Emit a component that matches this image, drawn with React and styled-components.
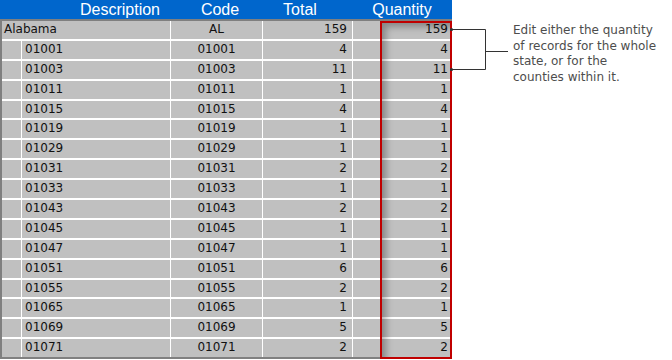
import styled, { createGlobalStyle } from "styled-components";

const counties = [
  ["01001", 4],
  ["01003", 11],
  ["01011", 1],
  ["01015", 4],
  ["01019", 1],
  ["01029", 1],
  ["01031", 2],
  ["01033", 1],
  ["01043", 2],
  ["01045", 1],
  ["01047", 1],
  ["01051", 6],
  ["01055", 2],
  ["01065", 1],
  ["01069", 5],
  ["01071", 2],
];

const App = () => {
  return (
    <>
      <GlobalStyle />
      <Page>
        <TableWrap>
          <Header>
            <HeadCell>Description</HeadCell>
            <HeadCell>Code</HeadCell>
            <HeadCell>Total</HeadCell>
            <HeadCell $pad={22}>Quantity</HeadCell>
          </Header>
          <Body>
            <Row>
              <Desc $state>Alabama</Desc>
              <Code>AL</Code>
              <Num>159</Num>
              <Qty>159</Qty>
            </Row>
            {counties.map(([code, total]) => (
              <Row key={code}>
                <Indent />
                <Desc>{code}</Desc>
                <Code>{code}</Code>
                <Num>{total}</Num>
                <Qty>{total}</Qty>
              </Row>
            ))}
          </Body>
          <Highlight />
        </TableWrap>
        <Note>
          <Bracket width="60" height="80" viewBox="0 0 60 80">
            <circle cx="1.5" cy="29.5" r="1.6" fill="#333" />
            <circle cx="1.5" cy="69.5" r="1.6" fill="#333" />
            <path
              d="M1.5 29.5 H35.5 V69.5 H1.5 M35.5 51.5 H58"
              fill="none"
              stroke="#333"
              strokeWidth="1"
            />
          </Bracket>
          <NoteText>
            Edit either the quantity
            <br />
            of records for the whole
            <br />
            state, or for the
            <br />
            counties within it.
          </NoteText>
        </Note>
      </Page>
    </>
  );
};

const GlobalStyle = createGlobalStyle`
  body {
    margin: 0;
    background: #ffffff;
  }
`;

const Page = styled.div`
  width: 672px;
  height: 360px;
  display: flex;
  overflow: hidden;
`;

const TableWrap = styled.div`
  position: relative;
  width: 452px;
  flex-shrink: 0;
`;

const Header = styled.div`
  height: 19px;
  background: #0066cc;
  border-bottom: 2px solid #7f7f7f;
  display: grid;
  grid-template-columns: 100px 100px 60px 1fr;
  padding-left: 70px;
  font-family: "Liberation Sans", Arial, sans-serif;
  font-size: 16px;
  color: #ffffff;
`;

const HeadCell = styled.div`
  text-align: center;
  line-height: 19px;
  padding-left: ${(p) => p.$pad || 0}px;
`;

const Body = styled.div`
  display: flex;
  flex-direction: column;
  gap: 2px;
  background: #ffffff;
  border-left: 2px solid #7f7f7f;
  border-bottom: 2px solid #808080;
`;

const Row = styled.div`
  height: 17.9px;
  display: grid;
  grid-template-columns: 19px 148px 91px 89px 1fr;
  column-gap: 1px;
  font-family: "DejaVu Sans", Verdana, sans-serif;
  font-size: 12px;
  color: #111111;

  & > div {
    background: #c0c0c0;
    line-height: 17.9px;
    white-space: nowrap;
  }
`;

const Indent = styled.div``;

const Desc = styled.div`
  grid-column: ${(p) => (p.$state ? "1 / 3" : "2 / 3")};
  padding-left: ${(p) => (p.$state ? 2 : 3)}px;
`;

const Code = styled.div`
  text-align: center;
`;

const Num = styled.div`
  text-align: right;
  padding-right: 5px;
`;

const Qty = styled.div`
  text-align: right;
  padding-right: 4px;
`;

const Highlight = styled.div`
  position: absolute;
  left: 380px;
  top: 21px;
  width: 72px;
  height: 338px;
  box-sizing: border-box;
  border: 2px solid #c00000;
  box-shadow: inset 6px 6px 7px -2px rgba(0, 0, 0, 0.3);
  pointer-events: none;
`;

const Note = styled.div`
  position: relative;
  flex: 1;
  padding: 23px 0 0 61px;
`;

const Bracket = styled.svg`
  position: absolute;
  left: -2px;
  top: 0;
`;

const NoteText = styled.div`
  font-family: "DejaVu Sans", Verdana, sans-serif;
  font-size: 12px;
  line-height: 15.5px;
  color: #4d4d4d;
`;

export default App;
